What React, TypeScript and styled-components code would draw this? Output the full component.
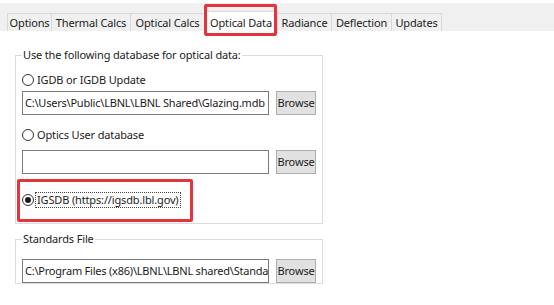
import React from "react";
import styled, { createGlobalStyle, css } from "styled-components";

const GlobalStyle = createGlobalStyle`
  html, body { margin: 0; padding: 0; background: #ffffff; }
  body { font-family: "Noto Sans", "Open Sans", Arial, sans-serif; color: #1b1b1b; letter-spacing: -0.15px; }
  * { box-sizing: border-box; }
`;

const Page = styled.div`
  position: relative;
  width: 554px;
  height: 305px;
  overflow: hidden;
  background: #ffffff;
`;

const TabStrip = styled.div`
  margin-top: 3px;
  height: 28px;
  background: #f0f0f0;
  display: flex;
  align-items: flex-end;
  padding-left: 7px;
`;

const Tab = styled.div<{ $active?: boolean; $w: number }>`
  width: ${(p) => p.$w}px;
  height: 18px;
  border: 1px solid #d9d9d9;
  border-bottom: none;
  margin-right: -1px;
  font-size: 11px;
  line-height: 17px;
  white-space: nowrap;
  background: #f0f0f0;
  display: flex;
  align-items: center;
  justify-content: center;
  flex: none;
  ${(p) =>
    p.$active &&
    css`
      height: 22px;
      margin-bottom: -2px;
      background: #ffffff;
      position: relative;
      z-index: 1;
    `}
`;

const Content = styled.div`
  padding-left: 15px;
`;

const Group = styled.fieldset<{ $mt: number; $h?: number }>`
  margin: ${(p) => p.$mt}px 0 0 0;
  width: 308px;
  border: 1px solid #dcdcdc;
  padding: 9px 6px 15px 6px;
  min-width: 0;
  ${(p) =>
    p.$h &&
    css`
      height: ${p.$h}px;
      overflow: hidden;
      padding-top: 12px;
      padding-bottom: 0;
    `}
`;

const Legend = styled.legend`
  font-size: 11px;
  line-height: 16px;
  padding: 0 1px;
  margin-left: 0;
  white-space: nowrap;
`;

const RadioRow = styled.div<{ $mt?: number }>`
  display: flex;
  align-items: center;
  height: 16px;
  margin-top: ${(p) => p.$mt ?? 0}px;
  font-size: 11px;
`;

const RadioCircle = styled.span<{ $checked?: boolean }>`
  width: 12px;
  height: 12px;
  border-radius: 50%;
  border: 1px solid #333333;
  background: #ffffff;
  display: inline-flex;
  align-items: center;
  justify-content: center;
  flex: none;
  &::after {
    content: "";
    width: 6px;
    height: 6px;
    border-radius: 50%;
    background: ${(p) => (p.$checked ? "#1b1b1b" : "transparent")};
  }
`;

const RadioLabel = styled.span<{ $focused?: boolean }>`
  margin-left: 1px;
  line-height: 14px;
  padding: 0 1px;
  border: 1px dotted ${(p) => (p.$focused ? "#444" : "transparent")};
  white-space: nowrap;
`;

const FieldRow = styled.div<{ $mt?: number }>`
  display: flex;
  align-items: stretch;
  gap: 7px;
  height: 24px;
  margin-top: ${(p) => p.$mt ?? 0}px;
`;

const PathField = styled.div`
  width: 247px;
  flex: none;
  border: 1px solid #7a7a7a;
  background: #ffffff;
  font-size: 11px;
  letter-spacing: -0.22px;
  line-height: 22px;
  padding: 0 2px;
  white-space: nowrap;
  overflow: hidden;
`;

const BrowseButton = styled.div`
  width: 40px;
  flex: none;
  border: 1px solid #adadad;
  background: #e1e1e1;
  font-size: 11px;
  line-height: 22px;
  text-align: center;
  white-space: nowrap;
  overflow: hidden;
`;

const Highlight = styled.div<{ $x: number; $y: number; $w: number; $h: number }>`
  position: absolute;
  left: ${(p) => p.$x}px;
  top: ${(p) => p.$y}px;
  width: ${(p) => p.$w}px;
  height: ${(p) => p.$h}px;
  border: 3px solid #e6343c;
  border-radius: 2px;
  pointer-events: none;
  z-index: 5;
`;

const tabs: { label: string; w: number }[] = [
  { label: "Options", w: 45 },
  { label: "Thermal Calcs", w: 80 },
  { label: "Optical Calcs", w: 75 },
  { label: "Optical Data", w: 74 },
  { label: "Radiance", w: 55 },
  { label: "Deflection", w: 61 },
  { label: "Updates", w: 51 },
];

export default function App() {
  return (
    <Page>
      <GlobalStyle />
      <TabStrip>
        {tabs.map((t) => (
          <Tab key={t.label} $w={t.w} $active={t.label === "Optical Data"}>
            {t.label}
          </Tab>
        ))}
      </TabStrip>
      <Content>
        <Group $mt={16}>
          <Legend>Use the following database for optical data:</Legend>
          <RadioRow>
            <RadioCircle />
            <RadioLabel>IGDB or IGDB Update</RadioLabel>
          </RadioRow>
          <FieldRow $mt={3}>
            <PathField>C:\Users\Public\LBNL\LBNL Shared\Glazing.mdb</PathField>
            <BrowseButton>Browse</BrowseButton>
          </FieldRow>
          <RadioRow $mt={12}>
            <RadioCircle />
            <RadioLabel>Optics User database</RadioLabel>
          </RadioRow>
          <FieldRow $mt={7}>
            <PathField />
            <BrowseButton>Browse</BrowseButton>
          </FieldRow>
          <RadioRow $mt={18}>
            <RadioCircle $checked />
            <RadioLabel $focused>IGSDB (https://igsdb.lbl.gov)</RadioLabel>
          </RadioRow>
        </Group>
        <Group $mt={7} $h={53}>
          <Legend>Standards File</Legend>
          <FieldRow>
            <PathField>C:\Program Files (x86)\LBNL\LBNL shared\Standa</PathField>
            <BrowseButton>Browse</BrowseButton>
          </FieldRow>
        </Group>
      </Content>
      <Highlight $x={204} $y={4} $w={73} $h={32} />
      <Highlight $x={17} $y={179} $w={176} $h={43} />
    </Page>
  );
}
